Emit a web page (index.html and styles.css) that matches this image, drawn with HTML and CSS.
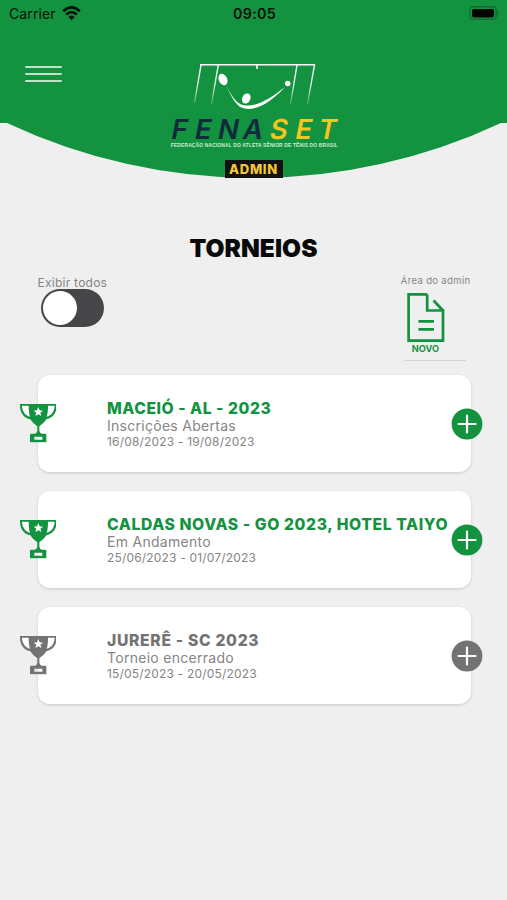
FILE: index.html
```html
<!DOCTYPE html>
<html lang="pt-BR">
<head>
<meta charset="utf-8">
<meta name="viewport" content="width=device-width, initial-scale=1">
<title>Torneios</title>
<link rel="stylesheet" href="styles.css">
</head>
<body>
<svg class="defs" aria-hidden="true">
  <symbol id="trophy" viewBox="0 0 110 116">
    <path fill="#fff" d="M4 5H106Q104 32 76 43L34 43Q6 32 4 5Z"/>
    <path fill="currentColor" fill-rule="evenodd" d="M0 0H110V5C110 27 98 42 79 46C74 55 65 61 58 67V80Q59 87 65 89H76Q79 89 79 93V115H30V93Q30 89 33 89H45Q51 87 52 80V67C45 61 36 55 31 46C12 42 0 27 0 5ZM6 5C7 22 15 34 30 38C27 29 26 18 26 5ZM84 5C84 18 83 29 80 38C95 34 103 22 104 5ZM43 98V107H67V98ZM55 9L51 19L41 20L49 26L46 36L55 31L64 36L61 26L69 20L59 19Z"/>
  </symbol>
  <symbol id="plus" viewBox="0 0 32 32">
    <circle cx="16" cy="16" r="15.4" fill="currentColor"/>
    <path d="M7.5 16H24.5M16 7.5V24.5" stroke="#fff" stroke-width="2.2" stroke-linecap="round"/>
  </symbol>
</svg>

<header class="header">
  <svg class="header-shape" viewBox="0 0 507 178" aria-hidden="true"><path d="M0 0H507V123H501A582 582 0 0 1 7 123H0Z" fill="#13923f"/></svg>
  <div class="status">
    <div class="carrier"><span>Carrier</span>
      <svg width="19" height="15" viewBox="0 0 19 15"><g fill="none" stroke="#04140a" stroke-width="2.7"><path d="M1.2 5.3Q9.5-2.4 17.8 5.3"/><path d="M4.2 8.6Q9.5 3.7 14.8 8.6"/></g><path d="M6.3 11Q9.5 8 12.7 11L9.5 14.2Z" fill="#04140a"/></svg>
    </div>
    <time>09:05</time>
    <svg class="battery" width="31" height="15" viewBox="0 0 31 15"><rect x=".8" y=".8" width="26.4" height="12.6" rx="3.7" fill="none" stroke="#0d6c30" stroke-width="1.4"/><rect x="3" y="3" width="22" height="8.4" rx="1.8" fill="#020402"/><path d="M28.7 4.8Q30.8 7 28.7 9.3Z" fill="#0d6c30"/></svg>
  </div>
  <div class="brand-row">
    <button class="menu" aria-label="Menu"><i></i><i></i><i></i></button>
    <svg class="logo" viewBox="0 0 170 90">
      <defs><linearGradient id="fade" gradientUnits="userSpaceOnUse" x1="0" y1="3" x2="0" y2="44"><stop offset="0" stop-color="#fff"/><stop offset=".5" stop-color="#fff" stop-opacity=".85"/><stop offset="1" stop-color="#fff" stop-opacity=".15"/></linearGradient></defs>
      <path d="M30 3.7H145.2M87 4V8" fill="none" stroke="#fff" stroke-width="1.6"/>
      <g stroke="url(#fade)" stroke-width="1.4"><path d="M31 4L24.5 42M48.3 4L41.5 43M127 4L120.5 43M144.5 4L137.5 43"/></g>
      <ellipse cx="53" cy="18.5" rx="4.2" ry="6" transform="rotate(-24 53 18.5)" fill="#fff"/>
      <ellipse cx="76.3" cy="37.5" rx="4" ry="5.3" transform="rotate(28 76.3 37.5)" fill="#fff"/>
      <circle cx="117.7" cy="22.5" r="2.7" fill="#fff"/>
      <path d="M56 24.5C61 33 66 44 75 44.5C88 45.5 101 37 115 26C101 41 88 48.8 76 47.8C66 47 62 36 56 24.5Z" fill="#fff"/>
      <g class="wordmark" transform="translate(0 77.6) skewX(-11)"><text class="navy" x="0 23.5 46.5 71.5" y="0">FENA</text><text class="gold" x="98.5 124 147" y="0">SET</text></g>
      <text class="tagline" x=".8" y="86" textLength="167" lengthAdjust="spacing">FEDERAÇÃO NACIONAL DO ATLETA SÊNIOR DE TÊNIS DO BRASIL</text>
    </svg>
  </div>
  <span class="badge">ADMIN</span>
</header>

<main>
  <h1>TORNEIOS</h1>
  <section class="tools">
    <div class="filter"><span class="filter-label">Exibir todos</span><button class="toggle" role="switch" aria-checked="false" aria-label="Exibir todos"><i></i></button></div>
    <div class="admin"><span class="admin-label">Área do admin</span>
      <a class="new">
        <svg width="38" height="50" viewBox="0 0 38 50" fill="none" stroke="#13923f" stroke-width="2.7"><path d="M20.2 1.4H1.6V47.6H36V17.5H20.2V1.4M36 17.5L26.6 7.5M11.5 28.4H27M11.5 36.4H27"/></svg>
        <span>NOVO</span>
      </a>
    </div>
  </section>
  <section class="list">
    <article class="card"><svg class="trophy"><use href="#trophy"/></svg><div class="info"><h2 class="t1">MACEIÓ - AL - 2023</h2><p class="state">Inscrições Abertas</p><p class="dates">16/08/2023 - 19/08/2023</p></div><svg class="plus"><use href="#plus"/></svg></article>
    <article class="card"><svg class="trophy"><use href="#trophy"/></svg><div class="info"><h2 class="t2">CALDAS NOVAS - GO 2023, HOTEL TAIYO</h2><p class="state">Em Andamento</p><p class="dates">25/06/2023 - 01/07/2023</p></div><svg class="plus"><use href="#plus"/></svg></article>
    <article class="card closed"><svg class="trophy"><use href="#trophy"/></svg><div class="info"><h2 class="t3">JURERÊ - SC 2023</h2><p class="state">Torneio encerrado</p><p class="dates">15/05/2023 - 20/05/2023</p></div><svg class="plus"><use href="#plus"/></svg></article>
  </section>
</main>
</body>
</html>
```

FILE: styles.css
```css
* { box-sizing: border-box; }
body { margin: 0; min-height: 900px; background: #efefef; font-family: Inter, "Liberation Sans", sans-serif; color: #858585; overflow-x: hidden; }
h1, h2, p { margin: 0; }
button { border: 0; padding: 0; background: none; display: block; }
svg { display: block; flex: none; }
.defs { position: absolute; width: 0; height: 0; }
.header { position: relative; height: 178px; display: flex; flex-direction: column; }
.header-shape { position: absolute; inset: 0; width: 507px; height: 178px; z-index: -1; }
.status { height: 28px; padding: 0 7px 0 9px; display: grid; grid-template-columns: 1fr auto 1fr; align-items: center; color: #04140a; font-size: 14px; }
.carrier { display: flex; align-items: center; gap: 6px; letter-spacing: .12px; margin-top: -1px; }
.status time { font-weight: 600; font-size: 14.3px; letter-spacing: .3px; margin-top: -1px; }
.battery { justify-self: end; margin-top: -1px; }
.brand-row { display: flex; align-items: flex-start; height: 132px; padding: 33px 0 0 25px; }
.menu { width: 38px; height: 25px; padding-top: 5px; display: flex; flex-direction: column; gap: 5px; }
.menu i { display: block; width: 37px; height: 2px; background: #bfe3ca; border-radius: 1px; }
.logo { width: 170px; height: 90px; margin-left: 107px; overflow: visible; }
.wordmark { font: 600 27.5px Inter, sans-serif; }
.navy { fill: #102b3c; }
.gold { fill: #f5c622; }
.tagline { font: 700 4.9px "Liberation Sans", sans-serif; fill: #d2ecda; }
.badge { align-self: center; width: 58px; height: 18px; background: #111; color: #f5c832; font-weight: 800; font-size: 13px; line-height: 19px; text-align: center; letter-spacing: .7px; }
h1 { margin-top: 54px; height: 32px; line-height: 32px; text-align: center; color: #090909; font-weight: 900; font-size: 24.5px; letter-spacing: .05px; }
.tools { height: 111px; padding: 11px 36.5px 0 37.5px; display: flex; justify-content: space-between; }
.filter-label { display: block; font-size: 12px; line-height: 14px; padding-top: .5px; height: 14px; letter-spacing: .25px; }
.toggle { width: 63px; height: 38px; margin-left: 3.5px; background: #464648; border-radius: 19px; padding: 2px; }
.toggle i { display: block; width: 34px; height: 34px; background: #fff; border-radius: 50%; }
.admin-label { display: block; font-size: 9.5px; line-height: 12px; letter-spacing: .35px; }
.new { display: flex; flex-direction: column; width: 62px; height: 74px; margin-left: 3px; padding: 6px 0 0 3px; border-bottom: 1px solid #d5d5d5; color: #13923f; }
.new span { margin-left: 5px; font-size: 9.2px; line-height: 11px; font-weight: 700; }
.list { padding: 0 36.5px 0 37.5px; display: flex; flex-direction: column; gap: 19px; }
.card { height: 97px; display: flex; align-items: flex-start; background: #fff; border-radius: 12px; box-shadow: 0 1px 3px rgba(0,0,0,.16); color: #13923f; }
.trophy { width: 36.7px; height: 38.7px; margin: 29px 0 0 -18px; }
.info { width: 345px; margin: 24px 0 0 50.8px; white-space: nowrap; flex: none; }
.info h2 { font-size: 15.7px; line-height: 20px; font-weight: 800; margin-bottom: -.6px; }
.info .t1 { letter-spacing: .54px; }
.info .t2 { letter-spacing: .6px; }
.info .t3 { letter-spacing: .68px; }
.state { font-size: 14px; line-height: 16px; color: #858585; letter-spacing: .28px; }
.dates { font-size: 12px; line-height: 15px; color: #858585; letter-spacing: .18px; }
.plus { width: 32px; height: 32px; margin: 33px 0 0 -1px; }
.closed { color: #737373; }
```
